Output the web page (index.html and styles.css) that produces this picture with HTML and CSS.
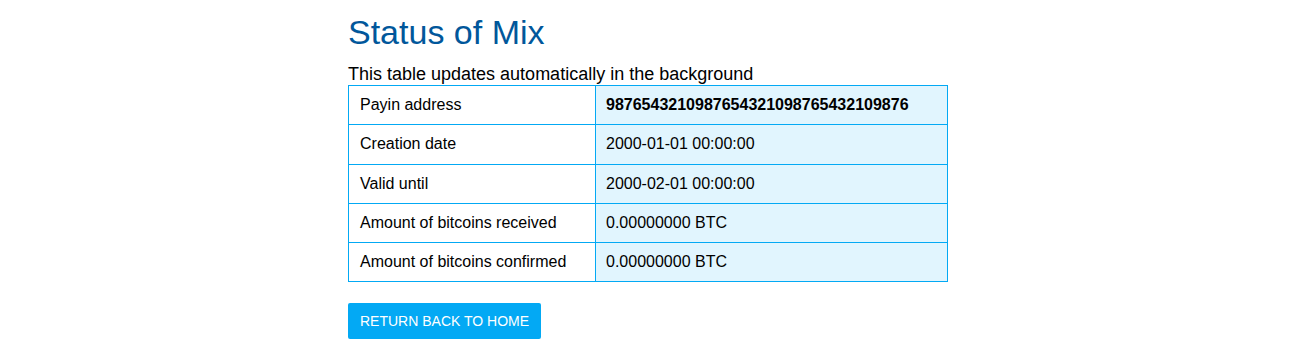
FILE: index.html
```html
<!DOCTYPE html>
<html lang="en">
<head>
<meta charset="utf-8">
<title>Status of Mix</title>
<link rel="stylesheet" href="styles.css">
</head>
<body>
<main class="container">
  <h1 class="title">Status of Mix</h1>
  <p class="subtitle">This table updates automatically in the background</p>
  <table class="status">
    <tbody>
      <tr><td class="label">Payin address</td><td class="value strong">9876543210987654321098765432109876</td></tr>
      <tr><td class="label">Creation date</td><td class="value">2000-01-01 00:00:00</td></tr>
      <tr><td class="label">Valid until</td><td class="value">2000-02-01 00:00:00</td></tr>
      <tr><td class="label">Amount of bitcoins received</td><td class="value">0.00000000 BTC</td></tr>
      <tr><td class="label">Amount of bitcoins confirmed</td><td class="value">0.00000000 BTC</td></tr>
    </tbody>
  </table>
  <a class="btn" href="#">Return back to home</a>
</main>
</body>
</html>
```
FILE: styles.css
```css
html, body {
  margin: 0;
  padding: 0;
  background: #ffffff;
}
body {
  font-family: "Liberation Sans", Arial, sans-serif;
  color: #000000;
}
.container {
  width: 604px;
  margin: 0 auto;
  display: flex;
  flex-direction: column;
  align-items: flex-start;
}
.title {
  margin: 12px 0 0 0;
  font-size: 34px;
  font-weight: normal;
  line-height: 41px;
  color: #01579b;
}
.subtitle {
  margin: 10px 0 0 0;
  font-size: 18px;
  line-height: 22px;
}
.status {
  width: 600px;
  border-collapse: collapse;
  font-size: 16px;
}
.status td {
  border: 1px solid #03a9f4;
  padding: 10px 11px;
  line-height: 18.3px;
}
.status .label {
  width: 224px;
}
.status .value {
  background: #e1f5fe;
  padding-left: 10px;
}
.status .strong {
  font-weight: bold;
}
.btn {
  margin-top: 21px;
  display: inline-block;
  background: #03a9f4;
  color: #ffffff;
  text-decoration: none;
  text-transform: uppercase;
  font-size: 14px;
  line-height: 36px;
  padding: 0 12px;
  border-radius: 2px;
}
```
